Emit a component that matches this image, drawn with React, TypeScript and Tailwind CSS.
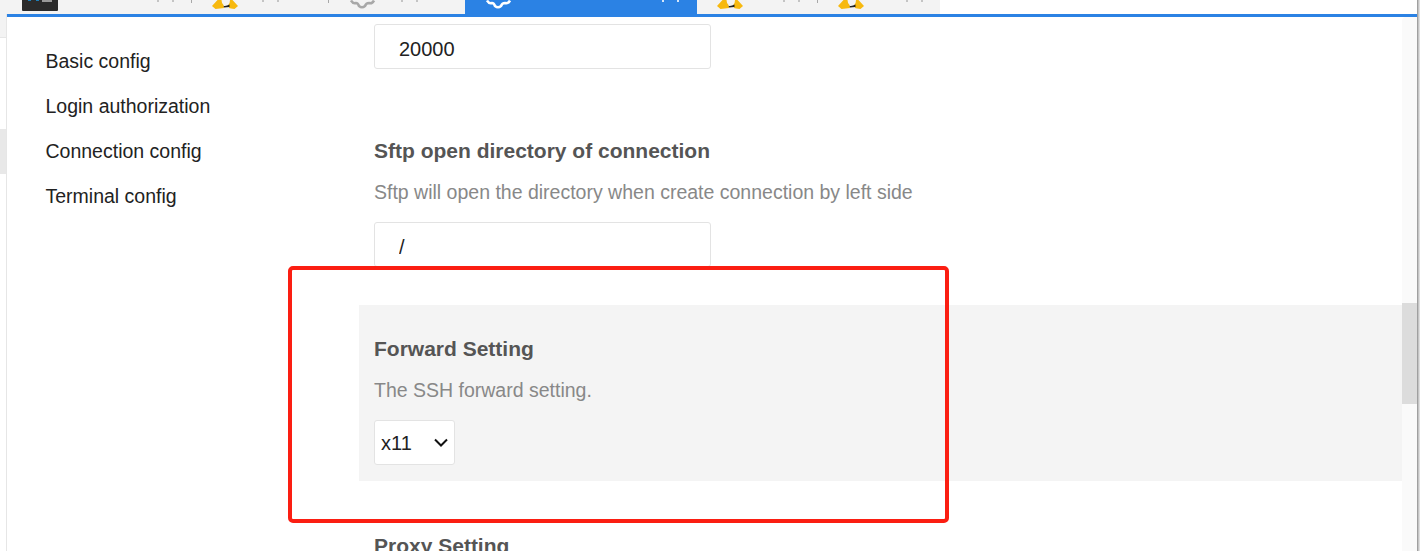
const font = { fontFamily: '"Liberation Sans", Arial, sans-serif' };

function PenguinFeet() {
  return (
    <svg width="26" height="9" viewBox="0 0 26 9" className="shrink-0">
      <path d="M0 6 L5.5 0 L9.5 0 Q9.5 3 11.5 5 L12 8 L8 8.5 L3.5 9 Z" fill="#f7b90f" />
      <path d="M26 6 L20.5 0 L18 0 Q18 3 16.5 4.5 L17 8 L19 8.5 L22.5 9 Z" fill="#f7b90f" />
      <path d="M11.5 5.8 Q14 6.5 17.5 4.5 L17.5 7 L12 7.6 Z" fill="#222" />
    </svg>
  );
}

function GearBottom({ color }: { color: string }) {
  return (
    <svg width="26" height="9" viewBox="0 0 26 9" fill="none" className="shrink-0">
      <path d="M1 0.5 Q3 4 6 3 Q8 3 9 6 Q12 8.5 15 6 Q16 3 19 3 Q22 4 24 0.5" stroke={color} strokeWidth="2.6" />
    </svg>
  );
}

function Dots({ color, className }: { color: string; className: string }) {
  return (
    <div className={`flex gap-[13px] ${className}`}>
      <span className="w-[2px] h-[2px]" style={{ backgroundColor: color }} />
      <span className="w-[2px] h-[2px]" style={{ backgroundColor: color }} />
    </div>
  );
}

function Sep() {
  return <span className="ml-auto w-px h-[3px] bg-[#a8a8a8]" />;
}

function TabBar() {
  return (
    <div className="h-[14px] flex overflow-hidden bg-white">
      <div className="w-[940px] flex bg-[#f3f3f3]">
        <div className="w-[192px] flex">
          <div className="ml-[22px] w-[36px] h-[11px] bg-[#2b2b2b] rounded-b-[1px] relative">
            <span className="absolute left-[6px] top-0 w-[3px] h-[1px] bg-[#1d7fb8]" />
            <span className="absolute left-[14px] top-0 w-[3px] h-[1px] bg-[#1d7fb8]" />
            <span className="absolute left-[20px] top-0 w-[10px] h-[2px] bg-[#999]" />
          </div>
          <Dots color="#c4c4c4" className="ml-[99px]" />
          <Sep />
        </div>
        <div className="w-[137px] flex">
          <div className="ml-[20px]">
            <PenguinFeet />
          </div>
          <Dots color="#c4c4c4" className="ml-[24px]" />
          <Sep />
        </div>
        <div className="w-[136px] flex">
          <div className="ml-[21px]">
            <GearBottom color="#a8a8a8" />
          </div>
          <Dots color="#c4c4c4" className="ml-[25px]" />
        </div>
        <div className="w-[232px] flex bg-[#2b82e4]">
          <div className="ml-[21px]">
            <GearBottom color="#ffffff" />
          </div>
          <Dots color="#d5e6fa" className="ml-[150px]" />
        </div>
        <div className="w-[121px] flex">
          <div className="ml-[20px]">
            <PenguinFeet />
          </div>
          <Dots color="#c4c4c4" className="ml-[40px]" />
          <Sep />
        </div>
        <div className="flex-1 flex">
          <div className="ml-[20px]">
            <PenguinFeet />
          </div>
          <Dots color="#c4c4c4" className="ml-[42px]" />
        </div>
      </div>
    </div>
  );
}

function TextBox({ value }: { value: string }) {
  return (
    <input
      readOnly
      value={value}
      className="block w-[337px] h-[45px] bg-white border border-[#e3e3e3] rounded-[3px] pl-[24px] pt-[5px] text-[20px] text-[#222] outline-none"
      style={font}
    />
  );
}

function Title({ children, className = "" }: { children: string; className?: string }) {
  return <h3 className={`text-[21px] leading-[30px] font-bold text-[#555] ${className}`}>{children}</h3>;
}

function Hint({ children }: { children: string }) {
  return <p className="mt-[11px] text-[19.5px] leading-[30px] text-[#888]">{children}</p>;
}

export default function App() {
  return (
    <div className="relative h-[551px] overflow-hidden bg-white flex" style={font}>
      <div className="flex-1 min-w-0 flex flex-col">
        <TabBar />
        <div className="flex-1 min-h-0 flex">
          {/* left sliver of the window behind */}
          <div className="w-[7px] shrink-0 border-r border-[#e6e6e6] bg-white">
            <div className="h-[24px] bg-[#f3f3f3] border-b border-[#e6e6e6]" />
            <div className="mt-[91px] h-[45px] bg-[#e8e8e8]" />
          </div>

          <div className="flex-1 min-w-0 flex border-t-[3px] border-[#2b82e4]">
            <ul className="w-[352px] shrink-0 pl-[38.5px] pt-[22px] text-[19.5px] leading-[45px] text-[#222]">
              <li>Basic config</li>
              <li>Login authorization</li>
              <li>Connection config</li>
              <li>Terminal config</li>
            </ul>

            <div className="flex-1 min-w-0 pt-[7px]">
              <div className="pl-[15px]">
                <TextBox value="20000" />
                <Title className="mt-[67px]">Sftp open directory of connection</Title>
                <Hint>Sftp will open the directory when create connection by left side</Hint>
                <div className="mt-[15px]">
                  <TextBox value="/" />
                </div>
              </div>

              <div className="mt-[38px] bg-[#f4f4f4] pl-[15px] pt-[29px] pb-[16px]">
                <Title>Forward Setting</Title>
                <Hint>The SSH forward setting.</Hint>
                <div className="relative mt-[15px] w-[81px] h-[45px]">
                  <select
                    className="block w-full h-full appearance-none bg-white border border-[#e3e3e3] rounded-[3px] pl-[6px] text-[20px] text-[#222] outline-none"
                    style={font}
                    defaultValue="x11"
                  >
                    <option value="x11">x11</option>
                  </select>
                  <svg
                    width="14"
                    height="9"
                    viewBox="0 0 14 9"
                    fill="none"
                    className="absolute left-[60px] top-[18px] pointer-events-none"
                  >
                    <path d="M1 1.5 L7 7.5 L13 1.5" stroke="#111" strokeWidth="2" />
                  </svg>
                </div>
              </div>

              <div className="pl-[15px] mt-[50px]">
                <Title>Proxy Setting</Title>
              </div>
            </div>

            <div className="w-[15px] shrink-0 bg-[#fafafa] rounded-tl-[4px]">
              <div className="mt-[286px] h-[101px] bg-[#dcdcdc]" />
            </div>
          </div>
        </div>
      </div>

      {/* edge of the window */}
      <div className="w-[3px] shrink-0 bg-gradient-to-r from-[#8e8e8e] via-[#c4c4c4] to-[#ececec]" />

      {/* red annotation */}
      <div className="absolute left-[288px] top-[266px] w-[661px] h-[257px] border-[4px] border-[#fb1e12] rounded-[5px] pointer-events-none" />
    </div>
  );
}
